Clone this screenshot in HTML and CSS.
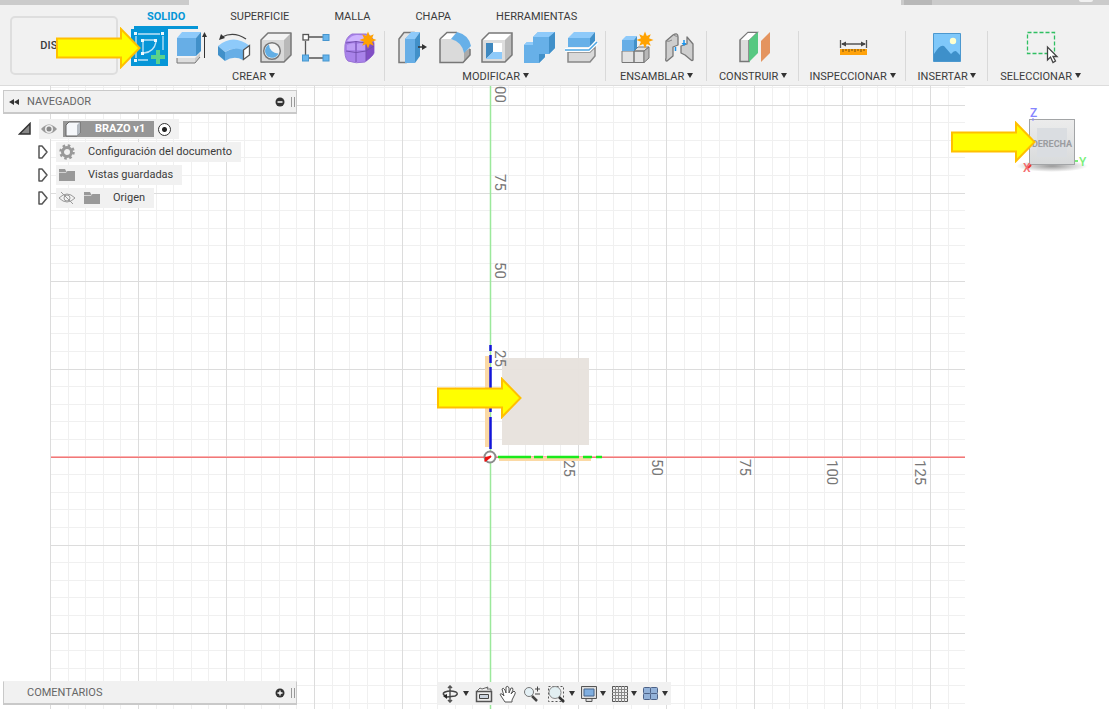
FILE: index.html
```html
<!DOCTYPE html>
<html lang="es">
<head>
<meta charset="utf-8">
<meta name="viewport" content="width=device-width, initial-scale=1">
<title>BRAZO v1</title>
<link rel="stylesheet" href="styles.css">
</head>
<body>
<svg class="defs" aria-hidden="true">
  <defs>
    <symbol id="arrow" viewBox="0 0 86 42">
      <path d="M1 11.500H65V2L83.500 21L65 40V30.500H1Z" fill="#ffff00" stroke="#ffc000" stroke-width="2"/>
    </symbol>
    <symbol id="star" viewBox="-9 -9 18 18">
      <path d="M0-8.500L1.800-4L5.800-5.800L4-1.800L8.500 0L4 1.800L5.800 5.800L1.800 4L0 8.500L-1.800 4L-5.800 5.800L-4 1.800L-8.500 0L-4-1.800L-5.800-5.800L-1.800-4Z" fill="#ffa200"/>
    </symbol>
    <symbol id="twist" viewBox="0 0 12 16">
      <path d="M2 2L5 2L10 8L5 14H2Z" fill="#fff" stroke="#555" stroke-width="1.500" stroke-linejoin="round"/>
    </symbol>
    <symbol id="folder" viewBox="0 0 18 16">
      <path d="M1 2H7L8 4H17V14H1Z" fill="#999"/><path d="M1 5.500H8L9 4" stroke="#d5d5d5" fill="none"/>
    </symbol>
  </defs>
</svg>

<header class="ribbon">
  <div class="strip">
    <span class="strip-left"></span>
    <span class="strip-right"><i class="strip-tab"></i><i class="strip-dot"></i></span>
  </div>
  <div class="ribbon-body">
    <button class="workspace-switch" type="button">DISEÑO <i class="caret"></i></button>
    <div class="ribbon-main">
      <nav class="tabs">
        <a class="tab active" href="#solido">SOLIDO</a>
        <a class="tab" href="#superficie">SUPERFICIE</a>
        <a class="tab" href="#malla">MALLA</a>
        <a class="tab" href="#chapa">CHAPA</a>
        <a class="tab" href="#herramientas">HERRAMIENTAS</a>
      </nav>
      <div class="groups">
        <section class="group">
          <div class="tools">
            <button type="button" class="tool" aria-label="Crear boceto"><svg viewBox="0 0 42 40">
              <rect x="3" y="1" width="37" height="37" fill="#0696d7"/>
              <g fill="none" stroke="#bfe4f7" stroke-width="1.300"><path d="M8 8V30M10 6H32M35 8V22M10 32H20M15 14V24M16 12H26M28 14Q26 24 16 25"/></g>
              <g fill="#eef8fd"><path d="M6 4h3v3H6zM33 4h3v3h-3zM6 31h3v3H6zM13 11h3v3h-3zM26 11h3v3h-3zM13 24h3v3h-3z"/></g>
              <path d="M28 22h4v5h5v4h-5v5h-4v-5h-5v-4h5z" fill="#5bd28b"/></svg></button>
            <button type="button" class="tool" aria-label="Extruir"><svg viewBox="0 0 42 40">
              <path d="M7 30H25L30 25V29L25 35H7Z" fill="#ccc"/><path d="M7 30H25V35H7Z" fill="#ddd"/><path d="M7 30V35H25L30 29" fill="none" stroke="#777"/>
              <path d="M7 10L12 4H31L26 10Z" fill="#8ecafa"/><path d="M7 10H26V28H7Z" fill="#67aee6"/><path d="M26 10L31 4V23L26 28Z" fill="#4190c9"/>
              <path d="M34.500 7V30" stroke="#333"/><path d="M32 9L34.500 4L37 9Z" fill="#333"/></svg></button>
            <button type="button" class="tool" aria-label="Revolución"><svg viewBox="0 0 42 40">
              <path d="M6 18Q21 5 38 18L31 23Q22 18 13 24Z" fill="#8ecafa"/><path d="M6 18L13 24V33L6 27Z" fill="#4190c9"/><path d="M13 24Q22 18 31 22V32Q22 27 13 33Z" fill="#67aee6"/>
              <path d="M31.500 22L37.500 17.500V27L31.500 31.500Z" fill="#fff" stroke="#555" stroke-width="1.300"/>
              <path d="M10 9Q22 3 34 11" fill="none" stroke="#444" stroke-width="1.300"/><path d="M7 12L9 6L13 10Z" fill="#333"/></svg></button>
            <button type="button" class="tool" aria-label="Agujero"><svg viewBox="0 0 42 40">
              <path d="M7 12L14 5H37L30 12Z" fill="#f3f3f3"/><path d="M30 12L37 5V27L30 34Z" fill="#b9b9b9"/><path d="M7 12H30V34H7Z" fill="#d9d9d9"/>
              <path d="M7 12L14 5H37V27L30 34H7Z" fill="none" stroke="#777" stroke-width="1.500" stroke-linejoin="round"/>
              <circle cx="18" cy="23" r="8.300" fill="#f3f3f3" stroke="#777" stroke-width="1.500"/><path d="M15 16.500A7 7 0 1 0 24.500 25.500A9 9 0 0 1 15 16.500Z" fill="#62aee4"/></svg></button>
            <button type="button" class="tool" aria-label="Patrón rectangular"><svg viewBox="0 0 42 40">
              <path d="M13 9H27M9.500 13V27M13 30H27" stroke="#555" stroke-width="1.300"/><rect x="7" y="6.500" width="5.500" height="5.500" fill="#fff" stroke="#555" stroke-width="1.300"/>
              <g fill="#67b5ec" stroke="#4796cf"><rect x="27" y="6.500" width="6" height="6"/><rect x="6.500" y="27" width="6" height="6"/><rect x="27" y="27" width="6" height="6"/></g></svg></button>
            <button type="button" class="tool" aria-label="Crear forma"><svg viewBox="0 0 42 40">
              <path d="M7 17Q8 9 14 6H28Q36 8 36 16V25Q35 28 27 34Q18 36 10 33Q6 30 7 17Z" fill="#a983ea" stroke="#9a74d6"/>
              <path d="M9 13Q14 6 20 7L31 8Q27 13 22 14Z" fill="#cfb4ff"/><path d="M28 16Q32 10 36 15V25Q34 29 28 33Z" fill="#814fc4"/>
              <path d="M8 23Q18 26 28 23L36 18M18 13V34M8 15Q18 12 28 15V33" fill="none" stroke="#7450b0"/>
              <path d="M9 17Q16 14 17 16V22H9ZM19 16Q25 14 27 17V22H19Z" fill="#c6a8fa" opacity=".7"/>
              <use href="#star" x="21" y="3" width="18" height="18"/></svg></button>
          </div>
          <button type="button" class="caption">CREAR <i class="caret"></i></button>
        </section>
        <section class="group">
          <div class="tools">
            <button type="button" class="tool" aria-label="Pulsar/tirar"><svg viewBox="0 0 42 40">
              <path d="M8 11L13 4.500H22L15 11V34.500H8Z" fill="#e4e4e4" stroke="#777" stroke-width="1.500"/><path d="M14 11L20 4H29L24 11Z" fill="#8ecafa"/><path d="M14 11H24V35H14Z" fill="#67aee6"/><path d="M24 11L29 4V28L24 35Z" fill="#4190c9"/>
              <path d="M27 19H32" stroke="#333" stroke-width="1.500"/><path d="M31 16L36 19L31 22Z" fill="#333"/></svg></button>
            <button type="button" class="tool" aria-label="Empalme"><svg viewBox="0 0 42 40">
              <path d="M7 11L14 4.500H23L18 11Q29 13 31 24L37 21V27L30 34.500H7Z" fill="#dadada"/><path d="M31 24L37 20V27L31 34Z" fill="#aaa"/><path d="M7 11L14 4.500H23L18 11Z" fill="#fff"/>
              <path d="M7 11L14 4.500H24M37 21V27L30 34.500H7V11" fill="none" stroke="#777" stroke-width="1.500"/><path d="M18 11L24 4Q36 7 38 18L31 25Q29 14 18 11Z" fill="#67b0e8"/></svg></button>
            <button type="button" class="tool" aria-label="Vaciado"><svg viewBox="0 0 42 40">
              <path d="M7 12L14 5H37L30 12Z" fill="#fff"/><path d="M30 12L37 5V27L30 34Z" fill="#bbb"/><path d="M7 12H30V34H7Z" fill="#ddd"/><path d="M7 12L14 5H37V27L30 34H7Z" fill="none" stroke="#777" stroke-width="1.500"/>
              <path d="M11 15H27V31H11Z" fill="#fff"/><path d="M11 15H18V24L11 31Z" fill="#3f88bf"/><path d="M11 31L18 24H27V31Z" fill="#8ecafa"/></svg></button>
            <button type="button" class="tool" aria-label="Combinar"><svg viewBox="0 0 42 40">
              <path d="M7 17L10 14H16V9L21 4H38V20L32 26H28V29L22 35H7Z" fill="#67b0e8"/><path d="M16 9L21 4H38L32 9ZM7 17L10 14H16V17Z" fill="#8ecafa"/><path d="M32 9L38 4V20L32 26ZM22 26H28V29L22 35Z" fill="#4190c9"/></svg></button>
            <button type="button" class="tool" aria-label="Dividir cuerpo"><svg viewBox="0 0 42 40">
              <path d="M9 10L15 4H36L31 10Z" fill="#8ecafa"/><path d="M9 10H31V19H9Z" fill="#67b0e8"/><path d="M31 10L36 4V13L31 19Z" fill="#4190c9"/>
              <path d="M9 24H31L36 19V28L31 34H9Z" fill="#d9d9d9" stroke="#888" stroke-width="1.500"/><path d="M6 22H30L38 14" fill="none" stroke="#fff" stroke-width="4"/><path d="M6 22H30L38 14" fill="none" stroke="#4ba6e3" stroke-width="1.500"/></svg></button>
          </div>
          <button type="button" class="caption">MODIFICAR <i class="caret"></i></button>
        </section>
        <section class="group">
          <div class="tools">
            <button type="button" class="tool" aria-label="Nuevo componente"><svg viewBox="0 0 42 40">
              <path d="M7 23H19V34.500H7ZM19 23H29V34.500H19ZM19 23L23 19H34L29 23Z" fill="#e2e2e2" stroke="#777" stroke-linejoin="round"/><path d="M29 23L34 19V30L29 34.500Z" fill="#b7b7b7" stroke="#777"/>
              <path d="M7 12L11 8H22L19 12Z" fill="#8ecafa"/><path d="M7 12H19V23H7Z" fill="#67aee6"/><path d="M19 12L22 8V20L19 23Z" fill="#4190c9"/><use href="#star" x="21" y="3" width="18" height="18"/></svg></button>
            <button type="button" class="tool" aria-label="Unión"><svg viewBox="0 0 42 40">
              <g fill="#cecece" stroke="#777" stroke-width="1.300" stroke-linejoin="round"><path d="M9 13L16 7Q21 4 21 9V17L16 19V28L10 33Q8 33 9 30Z"/><path d="M30 9L36 16V32Q35 33 34 32L28 27L24 25V18L30 16Z"/></g>
              <path d="M17 7Q19 9 21 8M9 13Q12 14 15 12" fill="none" stroke="#888"/>
              <path d="M18.500 19V23M27 12V16" stroke="#1a94ed" stroke-width="1.500"/><path d="M24.500 15H29.500L27 18Z" fill="#1a94ed"/></svg></button>
          </div>
          <button type="button" class="caption">ENSAMBLAR <i class="caret"></i></button>
        </section>
        <section class="group">
          <div class="tools">
            <button type="button" class="tool" aria-label="Plano de desfase"><svg viewBox="0 0 42 40">
              <path d="M8 12L16 4.500H25L17 12V33.500H8Z" fill="#ddd" stroke="#777" stroke-width="1.500"/><path d="M9 12L16 5H24L17 12Z" fill="#fff"/><path d="M17 12L26 4V25L17 34Z" fill="#56c881"/><path d="M29 13L38 4V25L29 34Z" fill="#e4945f"/></svg></button>
          </div>
          <button type="button" class="caption">CONSTRUIR <i class="caret"></i></button>
        </section>
        <section class="group">
          <div class="tools">
            <button type="button" class="tool" aria-label="Medir"><svg viewBox="0 0 42 40">
              <path d="M8.500 12V20M34.500 12V20M10 16H33" stroke="#555" stroke-width="1.300"/><path d="M9 16L14 13.500V18.500ZM34 16L29 13.500V18.500Z" fill="#444"/>
              <path d="M8 21H35V27H8Z" fill="#ffa20a"/><path d="M11 21V24M14 21V23M17 21V24M20 21V23M23 21V24M26 21V23M29 21V24M32 21V23" stroke="#76500c"/></svg></button>
          </div>
          <button type="button" class="caption">INSPECCIONAR <i class="caret"></i></button>
        </section>
        <section class="group">
          <div class="tools">
            <button type="button" class="tool" aria-label="Insertar imagen"><svg viewBox="0 0 42 40">
              <path d="M7.500 5.500H34.500V33.500H7.500Z" fill="#7fc8fa" stroke="#4c98cf"/><path d="M8 26Q14 16 18 18L25 26Q29 21 31 24L34 27V33H8Z" fill="#3e90ca"/><circle cx="27" cy="13" r="3.200" fill="#ffffce"/></svg></button>
          </div>
          <button type="button" class="caption">INSERTAR <i class="caret"></i></button>
        </section>
        <section class="group">
          <div class="tools">
            <button type="button" class="tool" aria-label="Seleccionar"><svg viewBox="0 0 42 40">
              <path d="M7.500 4.500H34.500V25.500H7.500Z" fill="none" stroke="#2fbf62" stroke-width="1.300" stroke-dasharray="4 2"/>
              <path d="M27.500 19V32L30.500 29L33 34.500L35.500 33L33 28.500H37Z" fill="#fff" stroke="#444" stroke-width="1.300"/></svg></button>
          </div>
          <button type="button" class="caption">SELECCIONAR <i class="caret"></i></button>
        </section>
      </div>
    </div>
  </div>
  <svg class="pointer pointer-tool" viewBox="0 0 86 42" aria-hidden="true"><use href="#arrow"/></svg>
</header>

<main class="workspace">
  <svg class="scene" viewBox="0 86 1109 623" preserveAspectRatio="xMidYMid slice" role="img" aria-label="Lienzo">
    <defs>
      <pattern id="grid" x="490" y="457" width="88" height="88" patternUnits="userSpaceOnUse">
        <path d="M18.500 0V88M35.500 0V88M53.500 0V88M70.500 0V88M0 17.500H88M0 35.500H88M0 52.500H88M0 70.500H88" stroke="#f0f0f0"/>
        <path d="M.500 0V88M0 .500H88" stroke="#dcdcdc"/>
      </pattern>
    </defs>
    <rect x="50" y="80" width="915" height="640" fill="url(#grid)"/>
    <rect x="51" y="456" width="914" height="2" fill="#fbb0b0"/>
    <rect x="51" y="457" width="914" height="1" fill="#f07878"/>
    <path d="M490.500 80V720" stroke="#9be89b" stroke-width="1.500"/>
    <path d="M502 358H589V445H502Z" fill="#e7e2dc" opacity=".95"/>
    <g class="scale">
      <text transform="translate(495 86) rotate(90)">00</text>
      <text transform="translate(495 174) rotate(90)">75</text>
      <text transform="translate(495 262) rotate(90)">50</text>
      <text transform="translate(495 350) rotate(90)">25</text>
      <text transform="translate(564 460) rotate(90)">25</text>
      <text transform="translate(652 459) rotate(90)">50</text>
      <text transform="translate(740 459) rotate(90)">75</text>
      <text transform="translate(827 460) rotate(90)">100</text>
      <text transform="translate(915 460) rotate(90)">125</text>
    </g>
    <path d="M485 356H490V447H485ZM499 457H591V461H499Z" fill="#fbd9a5"/>
    <path d="M490.500 345V351M490.500 355V363M490.500 367V404M490.500 408V412M490.500 417V449" stroke="#1414dc" stroke-width="2.500"/>
    <path d="M498 457H531M534 457H543M547 457H579M583 457H592M596 457H602" stroke="#1bea1b" stroke-width="2.500"/>
    <circle cx="490" cy="457" r="5.500" fill="#fff" stroke="#8c8c8c" stroke-width="2"/>
    <path d="M484.500 462L485 457L490 456L491 457Z" fill="#e11"/><path d="M485 461L491 456" stroke="#e11" stroke-width="2"/>
    <use href="#arrow" x="437" y="377" width="86" height="42"/>
  </svg>

  <button class="viewcube" type="button">
    <svg viewBox="0 0 76 76">
      <defs>
        <linearGradient id="face" x1="0" y1="0" x2="0" y2="1"><stop offset="0" stop-color="#ececec"/><stop offset="1" stop-color="#d8dadb"/></linearGradient>
        <radialGradient id="shade"><stop offset="0" stop-color="#999"/><stop offset="1" stop-color="#999" stop-opacity="0"/></radialGradient>
      </defs>
      <ellipse cx="37" cy="61" rx="36" ry="6" fill="url(#shade)"/>
      <rect x="14.500" y="14.500" width="45" height="45" fill="url(#face)" stroke="#a2a4a6"/>
      <rect x="22" y="23" width="30" height="29" fill="#dadde1"/>
      <text class="cube-face" x="37" y="42" text-anchor="middle">DERECHA</text>
      <text class="cube-axis" x="15" y="12" fill="#8585ff">Z</text><path d="M18 13V16" stroke="#8585ff"/>
      <text class="cube-axis" x="8" y="67" fill="#f46c6c">X</text><path d="M13 63L16 60" stroke="#e33" stroke-width="2"/>
      <text class="cube-axis" x="64" y="61" fill="#79ef79">Y</text><path d="M60 56H63" stroke="#79ef79" stroke-width="2"/>
    </svg>
  </button>
  <svg class="pointer pointer-cube" viewBox="0 0 86 42" aria-hidden="true"><use href="#arrow"/></svg>

  <aside class="browser">
    <div class="panel">
      <button type="button" class="collapse" aria-label="Contraer"><svg viewBox="0 0 12 10"><path d="M6 2V8L1 5ZM11 2V8L6 5Z" fill="#333"/></svg></button>
      <span class="panel-title">NAVEGADOR</span>
      <button type="button" class="round" aria-label="Ocultar"><svg viewBox="0 0 10 10"><circle cx="5" cy="5" r="4.500" fill="#333"/><path d="M2.500 5H7.500" stroke="#fff" stroke-width="1.500"/></svg></button>
      <i class="grip"></i>
    </div>
    <ul class="tree">
      <li class="node root">
        <svg class="root-twist" viewBox="0 0 14 14"><path d="M1.500 12H12V1.500Z" fill="#888" stroke="#333" stroke-width="1.500"/></svg>
        <div class="node-body">
          <svg class="icon" viewBox="0 0 18 16"><path d="M1 8Q9-1 17 8Q9 17 1 8Z" fill="#999"/><circle cx="9" cy="8" r="4" fill="#eee"/><circle cx="9" cy="8" r="2.500" fill="#888"/></svg>
          <span class="selected"><svg class="icon" viewBox="0 0 18 16"><path d="M2 4L5 1H16V12L13 15H2Z" fill="#f5f7fa" stroke="#666"/><path d="M13 4L16 1V12L13 15Z" fill="#b4bac1"/></svg><b>BRAZO v1</b></span>
          <input class="activate" type="radio" name="active" aria-label="Activar BRAZO v1" checked>
        </div>
      </li>
      <li class="node"><svg class="twist"><use href="#twist"/></svg>
        <div class="node-body"><svg class="icon" viewBox="0 0 18 16"><circle cx="9" cy="8" r="4.500" fill="none" stroke="#999" stroke-width="3"/><circle cx="9" cy="8" r="6.500" fill="none" stroke="#999" stroke-width="2.500" stroke-dasharray="2.500 2.600"/></svg><span>Configuración del documento</span></div></li>
      <li class="node"><svg class="twist"><use href="#twist"/></svg>
        <div class="node-body"><svg class="icon"><use href="#folder"/></svg><span>Vistas guardadas</span></div></li>
      <li class="node origin"><svg class="twist"><use href="#twist"/></svg>
        <div class="node-body"><svg class="icon" viewBox="0 0 18 16"><path d="M1 8Q9 0 17 8Q9 16 1 8ZM3 2L15 14" fill="none" stroke="#999"/><circle cx="9" cy="8" r="3" fill="none" stroke="#999"/></svg><svg class="icon"><use href="#folder"/></svg><span>Origen</span></div></li>
    </ul>
  </aside>

  <footer class="dock">
    <div class="panel comments">
      <span class="panel-title">COMENTARIOS</span>
      <button type="button" class="round" aria-label="Mostrar"><svg viewBox="0 0 10 10"><circle cx="5" cy="5" r="4.500" fill="#333"/><path d="M2.500 5H7.500M5 2.500V7.500" stroke="#fff" stroke-width="1.300"/></svg></button>
      <i class="grip"></i>
    </div>
    <div class="navbar">
      <button type="button" aria-label="Órbita"><svg viewBox="0 0 18 18"><path d="M9 1V17M7 3L9 1L11 3M7 15L9 17L11 15" fill="none" stroke="#555" stroke-width="1.500"/><path d="M5 11Q0 9 4 7Q9 5 15 7Q18 9 14 11L6 12" fill="none" stroke="#444" stroke-width="1.500"/><path d="M2 11L6 9V14Z" fill="#222"/></svg><i class="caret"></i></button>
      <button type="button" aria-label="Mirar a"><svg viewBox="0 0 18 18"><path d="M1.500 6.500H16.500V16.500H1.500Z" fill="#eee" stroke="#555" stroke-width="1.500"/><path d="M4.500 9.500H13.500V13.500H4.500Z" fill="#ccd4de" stroke="#444"/><path d="M2 6L5 3L7 4L13 2L12 4H16V6" fill="none" stroke="#666"/></svg></button>
      <button type="button" aria-label="Encuadre"><svg viewBox="0 0 18 18"><path d="M6 17L2 11Q0 8 3 9L5 11L3 4Q4 2 6 5L7 8L7 2Q9 0 10 3V8L12 3Q14 2 14 5L12 9L15 6Q17 7 16 9L13 15V17Z" fill="#fff" stroke="#555"/></svg></button>
      <button type="button" aria-label="Zoom"><svg viewBox="0 0 18 18"><circle cx="6" cy="7" r="4.500" fill="#e4f0f5" stroke="#777"/><path d="M9 11L14 16" stroke="#444" stroke-width="2.500"/><path d="M12 4H17M14.500 1.500V6.500M12 9H17" stroke="#444"/></svg></button>
      <button type="button" aria-label="Ajustar"><svg viewBox="0 0 18 18"><path d="M1.500 1.500H16.500V16.500H1.500Z" fill="none" stroke="#555" stroke-dasharray="2 2"/><circle cx="8" cy="7.500" r="6" fill="#e2eff2" stroke="#888"/><path d="M12 12L17 17" stroke="#333" stroke-width="2.500"/></svg><i class="caret"></i></button>
      <button type="button" aria-label="Visualización"><svg viewBox="0 0 18 18"><path d="M1.500 1.500H16.500V13.500H1.500Z" fill="#ddd" stroke="#555"/><path d="M4 4H14V11H4Z" fill="#7faee0" stroke="#48678d"/><path d="M6 14V16.500H12V14" fill="#ddd" stroke="#555"/></svg><i class="caret"></i></button>
      <button type="button" aria-label="Rejilla"><svg viewBox="0 0 18 18"><path d="M1.500 1.500H16.500V16.500H1.500Z" fill="#eee" stroke="#555"/><path d="M4.500 1V17M7.500 1V17M10.500 1V17M13.500 1V17M1 4.500H17M1 7.500H17M1 10.500H17M1 13.500H17" stroke="#888"/></svg><i class="caret"></i></button>
      <button type="button" aria-label="Ventanas"><svg viewBox="0 0 18 18"><g fill="#93b2d9" stroke="#4c6288"><rect x="1.500" y="2.500" width="7" height="6" rx="1"/><rect x="8.500" y="2.500" width="7" height="6" rx="1"/><rect x="1.500" y="8.500" width="7" height="6" rx="1"/><rect x="8.500" y="8.500" width="7" height="6" rx="1"/></g></svg><i class="caret"></i></button>
    </div>
  </footer>
</main>
</body>
</html>
```

FILE: styles.css
```css
* { box-sizing: border-box; }

body {
  margin: 0;
  min-height: 100vh;
  padding: 0 2px 4px 0;
  display: flex;
  flex-direction: column;
  background: #fff;
  color: #3c3c3c;
  font: 11px/14px Roboto, "Liberation Sans", sans-serif;
}

button {
  margin: 0;
  padding: 0;
  border: 0;
  background: none;
  color: inherit;
  font: inherit;
}

svg { display: block; }
.defs { position: absolute; width: 0; height: 0; }

.caret {
  display: inline-block;
  border: 3px solid transparent;
  border-top: 5px solid #333;
  border-bottom: 0;
  vertical-align: 2px;
}

/* Ribbon */
.ribbon {
  position: relative;
  height: 86px;
  display: flex;
  flex-direction: column;
  background: #f1f1f1;
  border-bottom: 1px solid #dcdcdc;
}

.strip { display: flex; justify-content: space-between; height: 5px; }
.strip-left { width: 17%; background: #cbcbcb; }
.strip-right {
  display: flex;
  justify-content: space-between;
  width: 208px;
  padding: 0 16px 0 3px;
  background: #cbcbcb;
  overflow: hidden;
}
.strip-tab { width: 28px; background: #b8b8b8; }
.strip-dot { width: 14px; height: 2px; border-radius: 0 0 7px 7px; background: #f1f1f1; }

.ribbon-body { flex: 1; display: flex; }

.workspace-switch {
  width: 108px;
  height: 59px;
  margin: 11px 4px 0 10px;
  border: 2px solid #dedede;
  border-radius: 5px;
  font-weight: 500;
}

.ribbon-main { flex: 1; display: flex; flex-direction: column; }

.tabs { display: flex; gap: 19px; padding-left: 12px; height: 23px; }
.tab {
  display: flex;
  align-items: center;
  padding: 0 13px;
  color: inherit;
  text-decoration: none;
}
.tab.active {
  position: relative;
  color: #0696d7;
  font-weight: 700;
}
.tab.active::after {
  content: "";
  position: absolute;
  left: 0;
  right: 0;
  top: 21px;
  height: 3px;
  background: #0696d7;
}

.groups {
  display: grid;
  grid-template-columns: 263fr 221fr 101fr 92fr 107fr 82fr 105fr;
  padding-right: 16px;
}
.group {
  display: flex;
  flex-direction: column;
  align-items: center;
  gap: 1px;
  height: 56px;
  background: linear-gradient(#d9d9d9, #d9d9d9) right 3px / 1px 50px no-repeat;
}
.group:last-child { background: none; }
.tools { display: flex; }
.tool svg { width: 42px; height: 40px; }
.caption { height: 15px; white-space: nowrap; }

.pointer { position: absolute; width: 86px; height: 42px; pointer-events: none; }
.pointer-tool { left: 56px; top: 27px; }

/* Workspace */
.workspace {
  position: relative;
  flex: 1;
  display: flex;
  flex-direction: column;
  justify-content: space-between;
  padding: 4px 3px;
  overflow: hidden;
}
.scene { position: absolute; inset: 0; width: 100%; height: 100%; }
.scale { fill: #777; font-size: 15px; }

.viewcube { position: absolute; top: 19px; right: 18px; }
.viewcube svg { width: 76px; height: 76px; }
.cube-face { fill: #9a9ca0; font: 700 9px Roboto, sans-serif; }
.cube-axis { font: 500 12px Roboto, sans-serif; }
.pointer-cube { top: 35px; right: 72px; }

.browser, .dock { position: relative; }
.browser { width: 294px; }

.panel {
  display: flex;
  align-items: center;
  width: 294px;
  height: 24px;
  padding: 0 1px 0 4px;
  border: 1px solid #c9c9c9;
  border-bottom-width: 2px;
  background: #f1f1f1;
  color: #666;
}
.collapse { width: 19px; }
.collapse svg { width: 12px; height: 10px; }
.panel-title { flex: 1; }
.round svg { width: 10px; height: 10px; }
.grip {
  width: 4px;
  height: 10px;
  margin-left: 6px;
  border: solid #999;
  border-width: 0 1px;
}

.tree {
  display: flex;
  flex-direction: column;
  gap: 3px;
  margin: 5px 0 0;
  padding: 0;
  list-style: none;
}
.node { display: flex; align-items: center; gap: 7px; height: 20px; padding-left: 34px; }
.twist { width: 12px; height: 16px; }
.node-body {
  display: flex;
  align-items: center;
  height: 20px;
  padding: 0 9px 0 2px;
  background: #f1f1f1;
  white-space: nowrap;
}
.icon { width: 18px; height: 16px; flex: none; }
.node-body > span { margin-left: 12px; }
.root { padding-left: 15px; }
.root-twist { width: 14px; height: 14px; }
.root .node-body { padding: 0 8px 0 1px; }
.root .selected {
  display: flex;
  align-items: center;
  gap: 13px;
  height: 16px;
  margin-left: 5px;
  padding: 0 9px 0 1px;
  background: #969696;
  color: #fff;
}
.origin .node-body > .icon + .icon { margin-left: 7px; }

.activate {
  appearance: none;
  width: 13px;
  height: 13px;
  margin: 0 0 0 4px;
  border: 1px solid #333;
  border-radius: 50%;
  background: radial-gradient(circle, #222 0 2px, #fff 3px);
}

/* Bottom dock */
.dock {
  display: grid;
  grid-template-columns: 1fr auto 1fr;
  align-items: end;
}
.comments { padding-left: 23px; border-top-color: #f1f1f1; }
.navbar {
  display: flex;
  align-items: center;
  gap: 6px;
  height: 23px;
  padding: 0 3px;
  background: #f1f1f1;
}
.navbar button { display: flex; align-items: center; gap: 4px; }
.navbar button:nth-child(n+6) { gap: 2px; margin-left: -1px; }
.navbar svg { width: 18px; height: 18px; }
```
